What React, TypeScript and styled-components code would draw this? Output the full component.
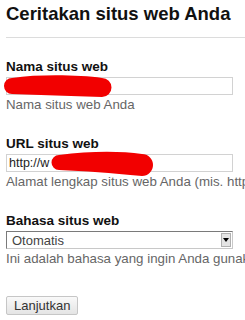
import { FC } from "react";
import styled, { createGlobalStyle } from "styled-components";

const GlobalStyle = createGlobalStyle`
  html, body {
    margin: 0;
    padding: 0;
    background: #fff;
    overflow: hidden;
  }
  body {
    font-family: "Liberation Sans", Arial, sans-serif;
  }
`;

const Page = styled.div`
  width: 245px;
  height: 320px;
  overflow: hidden;
`;

const Heading = styled.h1`
  margin: 0 0 0 6px;
  padding: 4px 0 13px;
  font-size: 18.5px;
  line-height: 20px;
  font-weight: bold;
  color: #111;
  white-space: nowrap;
  border-bottom: 1px solid #dcdcdc;
`;

const Form = styled.form`
  display: flex;
  flex-direction: column;
  gap: 23px;
  padding: 21px 0 0 6px;
  width: 400px;
`;

const Field = styled.div`
  display: flex;
  flex-direction: column;
  gap: 2px;
`;

const Label = styled.label`
  font-size: 13.5px;
  line-height: 16px;
  font-weight: bold;
  color: #111;
`;

const InputBox = styled.div`
  position: relative;
  box-sizing: border-box;
  width: 227px;
  height: 18px;
  border: 1px solid #d2d2d2;
  background: #fff;
  font-size: 12.5px;
  line-height: 16px;
  padding-left: 2px;
  color: #222;
`;

// red marker strokes that hide the entered values
const Scribble = styled.svg`
  position: absolute;
  top: -5px;
  left: -3px;
  overflow: visible;
  pointer-events: none;
`;

const Help = styled.div`
  font-size: 13.3px;
  line-height: 16px;
  color: #666;
  white-space: nowrap;
`;

const SelectBox = styled.div`
  box-sizing: border-box;
  width: 227px;
  height: 18px;
  display: flex;
  align-items: center;
  justify-content: space-between;
  border: 1px solid #7a7a7a;
  border-right-color: #c8c8c8;
  border-bottom-color: #c8c8c8;
  background: #fff;
  padding: 0 1px 0 5px;
  font-size: 13px;
  color: #444;
`;

const DropButton = styled.span`
  box-sizing: border-box;
  width: 10px;
  height: 14px;
  display: flex;
  align-items: center;
  justify-content: center;
  background: #e4e4e4;
  border: 1px solid #b0b0b0;
`;

const Submit = styled.button`
  align-self: flex-start;
  margin-top: 27px;
  box-sizing: border-box;
  height: 19px;
  padding: 0 7px;
  font-family: "Liberation Sans", Arial, sans-serif;
  font-size: 13px;
  color: #333;
  background: linear-gradient(#f9f9f9, #e4e4e4);
  border: 1px solid #c6c6c6;
  border-radius: 2px;
`;

const App: FC = () => (
  <Page>
    <GlobalStyle />
    <Heading>Ceritakan situs web Anda</Heading>
    <Form>
      <Field>
        <Label>Nama situs web</Label>
        <InputBox>
          <Scribble width="120" height="30" viewBox="0 0 120 30">
            <path
              d="M8 5 C 36 1, 76 2, 98 5 A 9.5 9.5 0 0 1 98 24 C 66 23, 36 22, 8 21 A 8 8 0 0 1 8 5 Z"
              fill="#f20000"
            />
          </Scribble>
        </InputBox>
        <Help>Nama situs web Anda</Help>
      </Field>
      <Field>
        <Label>URL situs web</Label>
        <InputBox>
          http://w
          <Scribble width="160" height="32" viewBox="0 0 160 32">
            <path
              d="M55 5 C 86 1, 116 1, 138 4 A 11 11 0 0 1 138 26 C 106 23, 81 21, 55 20 A 7.5 7.5 0 0 1 55 5 Z"
              fill="#f20000"
            />
          </Scribble>
        </InputBox>
        <Help>Alamat lengkap situs web Anda (mis. http://www.contoh.com)</Help>
      </Field>
      <Field>
        <Label>Bahasa situs web</Label>
        <SelectBox>
          Otomatis
          <DropButton>
            <svg width="6" height="4" viewBox="0 0 6 4">
              <path d="M0 0 L6 0 L3 4 Z" fill="#000" />
            </svg>
          </DropButton>
        </SelectBox>
        <Help>Ini adalah bahasa yang ingin Anda gunakan</Help>
        <Submit type="button">Lanjutkan</Submit>
      </Field>
    </Form>
  </Page>
);

export default App;
